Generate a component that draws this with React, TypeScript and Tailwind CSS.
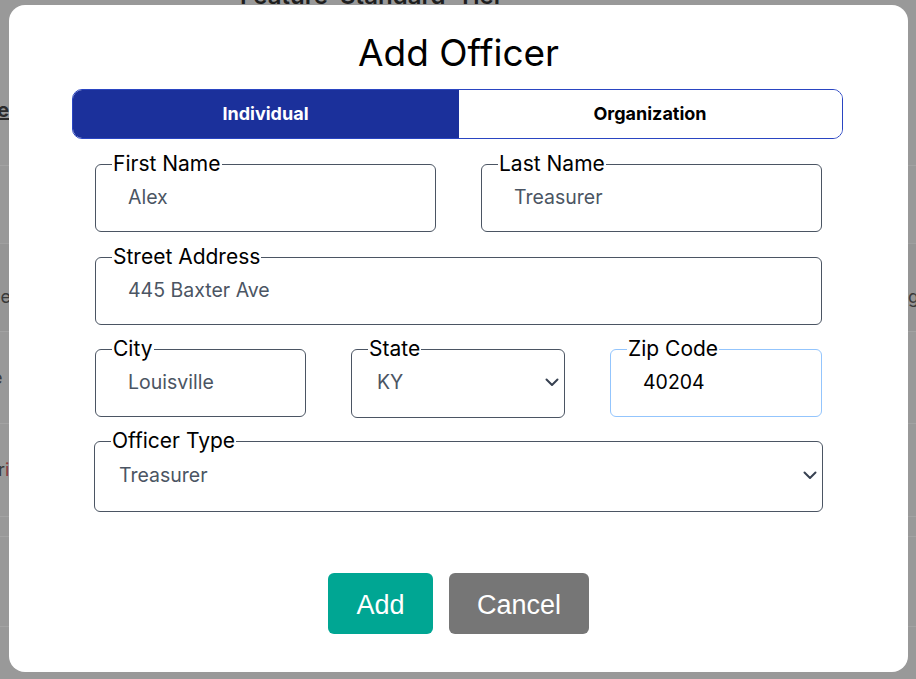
import { useState } from 'react';

const inter = { fontFamily: 'Inter, "Noto Sans", sans-serif' };

function Chevron() {
  return (
    <svg width="14" height="9" viewBox="0 0 14 9" fill="none" className="shrink-0 text-[#374151]">
      <path d="M1.5 1.5 7 7l5.5-5.5" stroke="currentColor" strokeWidth="2" strokeLinecap="round" strokeLinejoin="round" />
    </svg>
  );
}

function TextField({ label, value, focused }: { label: string; value: string; focused?: boolean }) {
  return (
    <fieldset
      className={`rounded-md border px-4 pb-[15px] ${focused ? 'border-[#93c5fd]' : 'border-[#4b5563]'}`}
    >
      <legend className="px-[1px] text-[21px] leading-7 text-black">{label}</legend>
      <input
        defaultValue={value}
        className={`h-[38px] w-full bg-transparent pl-4 text-[19.5px] outline-none ${focused ? 'text-black' : 'text-[#4b5563]'}`}
      />
    </fieldset>
  );
}

function SelectField({
  label,
  value,
  options,
  tall,
  pad,
}: {
  label: string;
  value: string;
  options: string[];
  tall?: boolean;
  pad: string;
}) {
  return (
    <fieldset className="rounded-md border border-[#4b5563] pb-[15px] pl-4 pr-[5px]">
      <legend className="px-[1px] text-[21px] leading-7 text-black">{label}</legend>
      <div className={`flex items-center ${tall ? 'h-[41px]' : 'h-[39px]'}`}>
        <select
          defaultValue={value}
          className={`h-full flex-1 appearance-none bg-transparent text-[19.5px] text-[#4b5563] outline-none ${pad}`}
        >
          {options.map((o) => (
            <option key={o}>{o}</option>
          ))}
        </select>
        <Chevron />
      </div>
    </fieldset>
  );
}

export default function App() {
  const [tab, setTab] = useState<'individual' | 'organization'>('individual');

  return (
    <div className="relative h-[679px] w-[916px] overflow-hidden bg-[#999999]" style={inter}>
      {/* page behind the overlay */}
      <div className="flex flex-col text-[#2b2b2b]">
        <div className="-mt-[16px] h-[24px] pl-[240px] text-2xl font-semibold leading-6 text-[#1f1f1f]">
          Feature&nbsp;&nbsp;Standard&nbsp;&nbsp;Tier
        </div>
        <div className="mt-[88px] flex h-[24px] justify-between">
          <span className="-ml-[14px] text-xl font-bold underline">Fe</span>
          <span />
        </div>
        <div className="mt-[45px] border-t border-[#a3a3a3]" />
        <div className="h-[77px]" />
        <div className="flex h-[88px] items-center justify-between border-t border-[#a0a0a0] bg-[#959595] pt-[18px] text-lg text-[#3a3a3a]">
          <span className="-ml-[10px]">ee</span>
          <span className="-mr-[3px]">ig</span>
        </div>
        <div className="flex h-[92px] items-center border-t border-[#a3a3a3] text-lg text-[#3a3a3a]">
          <span className="-ml-[8px]">e</span>
        </div>
        <div className="flex h-[93px] items-center border-t border-[#a3a3a3] text-lg text-[#3a3a3a]">
          <span className="-ml-[2px]">
            r<span className="text-[#8a3a3a]">i</span>
          </span>
        </div>
        <div className="h-[20px] border-t border-[#a3a3a3]" />
        <div className="h-[90px] border-t border-[#a3a3a3]" />
        <div className="border-t border-[#a3a3a3]" />
      </div>

      {/* modal */}
      <div className="absolute left-[9px] top-[5px] flex h-[667px] w-[899px] flex-col items-center rounded-2xl bg-white pt-[28px]">
        <h2 className="text-[37px] leading-[40px] text-black">Add Officer</h2>

        <div className="mr-[3px] mt-4 flex h-[50px] w-[771px] overflow-hidden rounded-[10px] border border-[#2a45c2]">
          <button
            onClick={() => setTab('individual')}
            className={`w-[386px] text-lg font-bold ${tab === 'individual' ? 'bg-[#1b309b] text-white' : 'bg-white text-black'}`}
          >
            Individual
          </button>
          <button
            onClick={() => setTab('organization')}
            className={`flex-1 text-lg font-bold ${tab === 'organization' ? 'bg-[#1b309b] text-white' : 'bg-white text-black'}`}
          >
            Organization
          </button>
        </div>

        <div className="mt-[11px] flex w-[727px] flex-col">
          <div className="grid grid-cols-2 gap-[45px]">
            <TextField label="First Name" value="Alex" />
            <TextField label="Last Name" value="Treasurer" />
          </div>
          <div className="mt-[11px]">
            <TextField label="Street Address" value="445 Baxter Ave" />
          </div>
          <div className="mt-[10px] grid grid-cols-[211px_214px_212px] items-start gap-[45px]">
            <TextField label="City" value="Louisville" />
            <SelectField label="State" value="KY" options={['KY', 'IN', 'OH', 'TN']} pad="pl-[9px]" />
            <TextField label="Zip Code" value="40204" focused />
          </div>
          <div className="-mx-[1px] mt-[9px]">
            <SelectField
              label="Officer Type"
              value="Treasurer"
              options={['Treasurer', 'Chair', 'Secretary']}
              tall
              pad="pl-2"
            />
          </div>
        </div>

        <div className="mt-[61px] flex gap-4" style={{ fontFamily: '"Liberation Sans", Arial, sans-serif' }}>
          <button className="h-[61px] w-[105px] rounded-md bg-[#00a693] pt-[3px] text-[27px] text-white">Add</button>
          <button className="h-[61px] w-[140px] rounded-md bg-[#767676] pt-[3px] text-[27px] text-white">Cancel</button>
        </div>
      </div>
    </div>
  );
}
